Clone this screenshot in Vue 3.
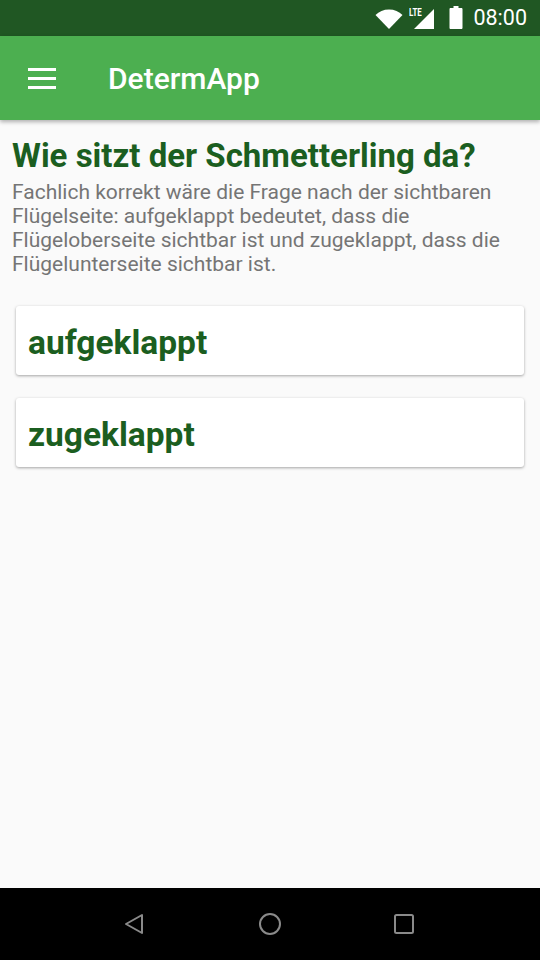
<script setup>
const options = ['aufgeklappt', 'zugeklappt']
</script>

<template>
  <div class="screen">
    <div class="status">
      <svg class="wifi" width="28" height="20" viewBox="0 0 28 20"><path d="M0.500 6C4 2.500 8.500 0.500 14 0.500S24 2.500 27.500 6L14 20Z" fill="#fff"/></svg>
      <div class="lte-wrap">
        <span class="lte">LTE</span>
        <svg class="signal" width="22" height="21" viewBox="0 0 22 21"><path d="M21 0V20H1Z" fill="#fff"/></svg>
      </div>
      <svg class="battery" width="14" height="23" viewBox="0 0 14 23"><path d="M4.500 0H9.500V2H12.500C13 2 13.500 2.500 13.500 3V22C13.500 22.500 13 23 12.500 23H1.500C1 23 .5 22.500 .5 22V3C.5 2.500 1 2 1.500 2H4.500Z" fill="#fff"/></svg>
      <span class="time">08:00</span>
    </div>
    <header class="bar">
      <svg class="menu" width="28" height="21" viewBox="0 0 28 21"><path d="M0 0H28V3H0ZM0 9H28V12H0ZM0 18H28V21H0Z" fill="#fff"/></svg>
      <span class="title">DetermApp</span>
    </header>
    <main class="content">
      <h1>Wie sitzt der Schmetterling da?</h1>
      <p>Fachlich korrekt wäre die Frage nach der sichtbaren Flügelseite: aufgeklappt bedeutet, dass die Flügeloberseite sichtbar ist und zugeklappt, dass die Flügelunterseite sichtbar ist.</p>
      <div class="options">
        <div v-for="o in options" :key="o" class="card">{{ o }}</div>
      </div>
    </main>
    <footer class="nav">
      <svg class="back" width="20" height="22" viewBox="0 0 20 22"><path d="M18 2V20L2 11Z" fill="none" stroke="#8a8a8a" stroke-width="2" stroke-linejoin="round"/></svg>
      <svg class="home" width="24" height="24" viewBox="0 0 24 24"><circle cx="12" cy="12" r="10" fill="none" stroke="#8a8a8a" stroke-width="2"/></svg>
      <svg width="20" height="20" viewBox="0 0 20 20"><rect x="1" y="1" width="18" height="18" rx="1.500" fill="none" stroke="#8a8a8a" stroke-width="2"/></svg>
    </footer>
  </div>
</template>

<style scoped>
.screen { width: 540px; height: 960px; display: flex; flex-direction: column; background: #fafafa; font-family: Roboto, sans-serif; overflow: hidden; }
.status { height: 36px; background: #205723; display: flex; align-items: center; justify-content: flex-end; padding-right: 13px; color: #fff; box-sizing: border-box; flex: none; }
.wifi { margin-right: 6px; margin-top: 1px; }
.lte-wrap { position: relative; width: 26px; height: 22px; margin-right: 14px; }
.lte { position: absolute; left: 0; top: 0; font-size: 11px; font-weight: 700; line-height: 12px; transform: scaleX(.72); transform-origin: left top; }
.signal { position: absolute; right: 0; top: 2px; }
.battery { margin-right: 10px; margin-top: -2px; }
.time { font-size: 21.500px; line-height: 24px; }
.bar { height: 84px; background: #4caf50; display: flex; align-items: center; color: #fff; flex: none; box-shadow: 0 2px 4px rgba(0,0,0,.3); position: relative; box-sizing: border-box; }
.menu { margin-left: 28px; margin-right: 52px; }
.title { font-size: 30px; font-weight: 500; margin-top: 1px; }
.content { flex: 1; padding: 0 12px; }
h1 { margin: 17px 0 0; font-size: 33px; line-height: 37px; font-weight: 700; color: #1b5e20; }
p { margin: 6px 0 0; font-size: 21px; line-height: 24px; color: #757575; }
.options { margin: 30px 4px 0 4px; display: flex; flex-direction: column; gap: 22px; }
.card { height: 69px; box-sizing: border-box; padding: 4px 0 0 12px; background: #fff; border-radius: 3px; font-size: 33.500px; font-weight: 700; color: #1b5e20; display: flex; align-items: center; box-shadow: 0 1px 3px rgba(0,0,0,.35); margin-bottom: 1px; }
.nav { height: 72px; background: #000; display: flex; align-items: center; padding-left: 124px; flex: none; }
.back { margin-right: 114px; }
.home { margin-right: 112px; }
</style>
